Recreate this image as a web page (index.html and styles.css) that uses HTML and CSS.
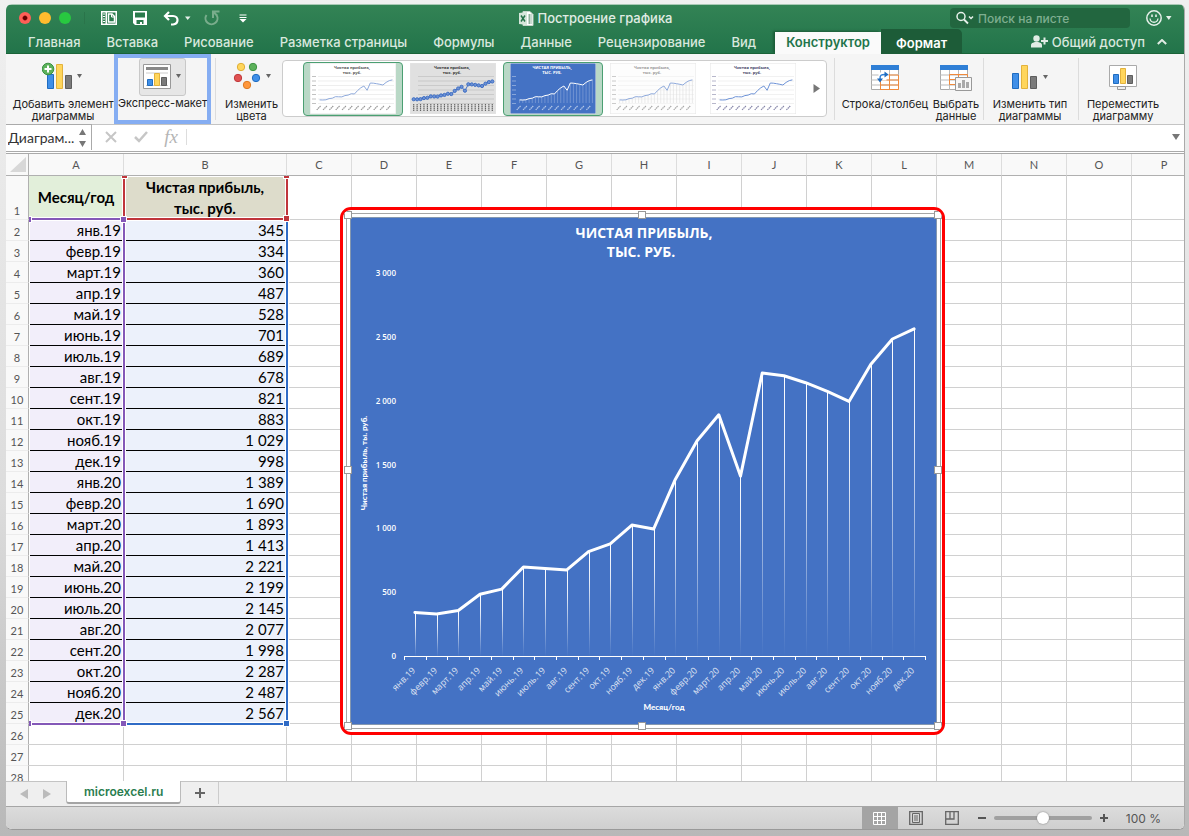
FILE: index.html
```html
<!DOCTYPE html>
<html lang="ru">
<head>
  <meta charset="UTF-8">
  <title>Построение графика</title>
  <link rel="stylesheet" href="styles.css">
</head>
<body>
  <div class="window">
    <header class="header">
      <div class="titlebar">
        <div class="title-left">
          <div class="lights">
            <button class="light light-red" aria-label="Закрыть"></button>
            <button class="light light-yellow" aria-label="Свернуть"></button>
            <button class="light light-green" aria-label="Развернуть"></button>
          </div>
          <button class="quick-button" aria-label="Шаблоны">
            <svg width="16" height="14" viewBox="0 0 16 14"><path d="M0 0h16v14H0z" fill="#fff"/><path d="M1.500 1.500h3v11h-3zM6 1.500h8.500v11H6z" fill="#2a7a4c"/><path d="M2 3h2M2 5.500h2M2 8h2M2 10.500h2" stroke="#fff"/><path d="M7.500 3h3.500l2.500 2.500V11h-6z" fill="#2a7a4c" stroke="#fff" stroke-width="1.500"/><path d="M10.500 3v3h3" fill="none" stroke="#fff"/></svg>
          </button>
          <button class="quick-button" aria-label="Сохранить">
            <svg width="14" height="14" viewBox="0 0 14 14"><path d="M0 0h14v14H2l-2-2z" fill="#fff"/><path d="M2 1.500h10v5H2zM3.500 9h7v4H9v-2H7v2H3.500z" fill="#2a7a4c"/></svg>
          </button>
          <button class="quick-button" aria-label="Отменить">
            <svg width="28" height="15" viewBox="0 0 28 15"><path d="M6 1L2 5l4 4M2 5h8c6 0 6 8 0 8.500H8" fill="none" stroke="#fff" stroke-width="2.200"/><path d="M22 5.500h5.500L24.700 9z" fill="#e6f0ea"/></svg>
          </button>
          <button class="quick-button redo" aria-label="Повторить">
            <svg width="16" height="16" viewBox="0 0 16 16"><path d="M12.500 5A6 6 0 1 1 2.500 5" fill="none" stroke="#79ad8c" stroke-width="2"/><path d="M15.500 1.500H9V8M9 1.500l4 4" fill="none" stroke="#79ad8c" stroke-width="2"/></svg>
          </button>
          <button class="quick-button" aria-label="Настройка панели">
            <svg width="8" height="9" viewBox="0 0 8 9"><path d="M.500 1h7M.500 3.500h7" stroke="#fff"/><path d="M.500 5h7L4 8.500z" fill="#fff"/></svg>
          </button>
        </div>
        <div class="doc-title">
          <svg width="15" height="15" viewBox="0 0 15 15"><path d="M4 .5h7l3 3v11H4z" fill="#fff" stroke="#c5d6cb"/><path d="M9 4h4M9 6h4M9 8h4M9 10h4M9 12h4M10.500 3v10" stroke="#8fb39d"/><path d="M0 2l8-1v13l-8-1z" fill="#d5e6da"/><path d="M2 4.500l4 6M6 4.500l-4 6" stroke="#26734a" stroke-width="1.500"/></svg>
          <span>Построение графика</span>
        </div>
        <div class="title-right">
          <label class="search">
            <svg width="20" height="14" viewBox="0 0 20 14"><circle cx="6" cy="5.500" r="4" fill="none" stroke="#e6f0ea" stroke-width="1.500"/><path d="M9 8.500l4 4" stroke="#e6f0ea" stroke-width="1.800"/><path d="M14 5.500l2 2 2-2" fill="none" stroke="#e6f0ea" stroke-width="1.500"/></svg>
            <input type="search" placeholder="Поиск на листе" aria-label="Поиск на листе">
          </label>
          <button class="quick-button" aria-label="Отзыв">
            <svg width="26" height="16" viewBox="0 0 26 16"><circle cx="8" cy="8" r="7.200" fill="none" stroke="#e6f0ea" stroke-width="1.500"/><path d="M6 4.500v2.500M10 4.500v2.500" stroke="#e6f0ea" stroke-width="1.600"/><path d="M4 8.500c.8 5 7.200 5 8 0" fill="none" stroke="#e6f0ea" stroke-width="1.300"/><path d="M20 6h5.500l-2.700 4z" fill="#e6f0ea"/></svg>
          </button>
        </div>
      </div>
      <nav class="tabs">
        <button class="tab">Главная</button>
        <button class="tab">Вставка</button>
        <button class="tab">Рисование</button>
        <button class="tab">Разметка страницы</button>
        <button class="tab">Формулы</button>
        <button class="tab">Данные</button>
        <button class="tab">Рецензирование</button>
        <button class="tab">Вид</button>
        <button class="tab tab-active">Конструктор</button>
        <button class="tab tab-format">Формат</button>
        <button class="share">
          <svg width="17" height="13" viewBox="0 0 17 13"><circle cx="5.500" cy="3.500" r="3.200" fill="#e0ece4"/><path d="M0 12.500V10c0-2 2-2.500 4-3h3c2 .5 4 1 4 3v2.500z" fill="#e0ece4"/><path d="M13.500 2.500v7M10 6h7" stroke="#e0ece4" stroke-width="2"/></svg>
          Общий доступ
        </button>
        <button class="collapse" aria-label="Свернуть ленту">
          <svg width="10" height="6" viewBox="0 0 10 6"><path d="M.8 5L5 1l4.200 4" fill="none" stroke="#e0ece4" stroke-width="2"/></svg>
        </button>
      </nav>
    </header>

    <div class="ribbon">
      <button class="tool tool-add">
        <span class="tool-icon">
          <svg width="42" height="30" viewBox="0 0 42 30"><path d="M5.500 13.500h6v14h-6z" fill="#3f8fe8" stroke="#1f6cc0"/><path d="M14.500 3.500h6v24h-6z" fill="#ffd65c" stroke="#e3b23c"/><path d="M23.500 14.500h6v13h-6z" fill="#7b7b7b" stroke="#5e5e5e"/><circle cx="6" cy="8" r="5.800" fill="#5cb15a" stroke="#3b9142"/><path d="M6 4.500v7M2.500 8h7" stroke="#fff" stroke-width="2"/><path d="M35 13h5l-2.500 4z" fill="#666"/></svg>
        </span>
        Добавить элемент<br>диаграммы
      </button>
      <button class="tool tool-express">
        <span class="tool-icon tool-pressed">
          <svg width="40" height="26" viewBox="0 0 40 26"><path d="M.5.5h27v24H.500z" fill="#fff" stroke="#999"/><path d="M3 3h22v3H3z" fill="#888"/><path d="M3 9h22M3 21.500h22" stroke="#ccc"/><path d="M4.500 15.500h5v6h-5z" fill="#3f8fe8" stroke="#1f6cc0"/><path d="M11.500 9.500h5v12h-5z" fill="#ffd65c" stroke="#e3b23c"/><path d="M18.500 13.500h5v8h-5z" fill="#7b7b7b" stroke="#5e5e5e"/><path d="M33 10h5l-2.500 4z" fill="#666"/></svg>
        </span>
        Экспресс-макет
      </button>
      <div class="separator"></div>
      <button class="tool tool-colors">
        <span class="tool-icon">
          <svg width="38" height="30" viewBox="0 0 38 30"><circle cx="8" cy="6" r="3.700" fill="#ffd65c" stroke="#dfae38"/><circle cx="20" cy="6" r="3.700" fill="#5cb15a" stroke="#3f9344"/><circle cx="5" cy="17" r="3.700" fill="#e05252" stroke="#c03a3c"/><circle cx="23" cy="17" r="3.700" fill="#3f8fe8" stroke="#1f6cc0"/><circle cx="14" cy="24" r="3.700" fill="#ff973c" stroke="#dc7a24"/><path d="M33 13h5l-2.500 4z" fill="#666"/></svg>
        </span>
        Изменить<br>цвета
      </button>
      <div class="gallery">
        <div class="gallery-items" id="gallery"></div>
        <button class="gallery-next" aria-label="Далее">
          <svg width="7" height="9" viewBox="0 0 7 9"><path d="M.5 0L7 4.500.500 9z" fill="#777"/></svg>
        </button>
      </div>
      <div class="separator"></div>
      <button class="tool tool-switch">
        <span class="tool-icon">
          <svg width="28" height="26" viewBox="0 0 28 26"><path d="M.5.500h27v24H.500z" fill="#fff" stroke="#aaa"/><path d="M0 0h28v5H0z" fill="#2f7fd6"/><path d="M0 10h28M0 15h28M0 20h28M9.500 5v20M18.500 5v20" stroke="#bbb"/><path d="M18 10h9M9 15h18M9 20h18M9.500 15v9M18.500 9v15M9 24.500h18.500V10" stroke="#f08a3c" fill="none"/><path d="M7.500 7.500h8v8h-8z" fill="#fff"/><path d="M9 14c0-4 1-4.500 5-4.500" fill="none" stroke="#2f7fd6" stroke-width="1.500"/><path d="M13.500 6.500l4 3-4 3zM6 13.500h6l-3 4z" fill="#1f6cc0"/></svg>
        </span>
        Строка/столбец
      </button>
      <button class="tool tool-select">
        <span class="tool-icon">
          <svg width="32" height="26" viewBox="0 0 32 26"><path d="M.5.500h27v24H.500z" fill="#fff" stroke="#aaa"/><path d="M0 0h28v5H0z" fill="#2f7fd6"/><path d="M0 10h28M0 15h28M0 20h28M9.500 5v20M18.500 5v20" stroke="#bbb"/><path d="M9.500 9.500h18v10h-18zM9 14.500h18M18.500 9v10" stroke="#f08a3c" fill="none"/><path d="M15.500 12.500h16v13h-16z" fill="#f7f7f7" stroke="#999"/><path d="M18 18h3v5h-3zM22 15h3v8h-3zM26 17h3v6h-3z" fill="#aaa"/></svg>
        </span>
        Выбрать<br>данные
      </button>
      <div class="separator"></div>
      <button class="tool tool-type">
        <span class="tool-icon">
          <svg width="36" height="26" viewBox="0 0 36 26"><path d="M.5 8.500h6v15h-6z" fill="#3f8fe8" stroke="#1f6cc0"/><path d="M9.500.500h6v23h-6z" fill="#ffd65c" stroke="#e3b23c"/><path d="M18.500 11.500h6v12h-6z" fill="#7b7b7b" stroke="#5e5e5e"/><path d="M31 10h5l-2.500 4z" fill="#666"/></svg>
        </span>
        Изменить тип<br>диаграммы
      </button>
      <div class="separator"></div>
      <button class="tool tool-move">
        <span class="tool-icon">
          <svg width="28" height="26" viewBox="0 0 28 26"><path d="M.5.500h27v21H.500z" fill="#fff" stroke="#aaa"/><path d="M8.500 24.500v-3h8v3z" fill="#eee" stroke="#999"/><path d="M4.500 9.500h5v9h-5z" fill="#3f8fe8" stroke="#1f6cc0"/><path d="M11.500 3.500h5v15h-5z" fill="#ffd65c" stroke="#e3b23c"/><path d="M18.500 10.500h5v8h-5z" fill="#7b7b7b" stroke="#5e5e5e"/></svg>
        </span>
        Переместить<br>диаграмму
      </button>
    </div>

    <div class="formula-bar">
      <div class="name-box">
        <input type="text" value="Диаграм..." aria-label="Имя">
        <svg width="7" height="18" viewBox="0 0 7 18"><path d="M0 6h7L3.500 0zM0 12h7l-3.500 6z" fill="#777"/></svg>
      </div>
      <button class="formula-button" aria-label="Отмена">
        <svg width="12" height="12" viewBox="0 0 12 12"><path d="M1 1l10 10M11 1L1 11" stroke="#c6c6c6" stroke-width="2"/></svg>
      </button>
      <button class="formula-button" aria-label="Ввод">
        <svg width="14" height="12" viewBox="0 0 14 12"><path d="M1 6l4 4 8-9" fill="none" stroke="#c6c6c6" stroke-width="2.500"/></svg>
      </button>
      <button class="formula-button fx">fx</button>
      <input class="formula-input" type="text" aria-label="Строка формул">
      <svg width="8" height="6" viewBox="0 0 8 6"><path d="M0 0h8L4 6z" fill="#777"/></svg>
    </div>

    <main class="sheet">
      <table class="grid">
        <thead><tr id="grid-head"></tr></thead>
        <tbody id="grid-body"></tbody>
      </table>
      <div class="ranges">
        <div class="range range-values"><i class="knob knob-se"></i></div>
        <div class="range range-title"><i class="knob knob-nw"></i><i class="knob knob-ne"></i><i class="knob knob-se"></i></div>
        <div class="range range-months"><i class="knob knob-nw"></i><i class="knob knob-ne"></i><i class="knob knob-sw"></i><i class="knob knob-se"></i></div>
      </div>
      <div class="chart">
        <svg id="chart" width="599" height="522" viewBox="-1 0 599 522"></svg>
      </div>
    </main>

    <div class="sheet-tabs">
      <button class="sheet-arrow" aria-label="Предыдущий лист"><svg width="8" height="10" viewBox="0 0 8 10"><path d="M8 0v10L0 5z" fill="#bbb"/></svg></button>
      <button class="sheet-arrow" aria-label="Следующий лист"><svg width="8" height="10" viewBox="0 0 8 10"><path d="M0 0v10l8-5z" fill="#bbb"/></svg></button>
      <button class="sheet-tab">microexcel.ru</button>
      <button class="sheet-add" aria-label="Новый лист"><svg width="10" height="10" viewBox="0 0 10 10"><path d="M5 0v10M0 5h10" stroke="#666" stroke-width="2"/></svg></button>
    </div>

    <footer class="status">
      <button class="view view-active" aria-label="Обычный">
        <svg width="13" height="13" viewBox="0 0 13 13"><path d="M.5.500h12v12H.500zM4.500.500v12M8.500.500v12M.5 4.500h12M.5 8.500h12" fill="none" stroke="#fff"/></svg>
      </button>
      <button class="view" aria-label="Разметка страницы">
        <svg width="14" height="14" viewBox="0 0 14 14"><path d="M.7.700h12.600v12.600H.700z" fill="none" stroke="#666" stroke-width="1.300"/><path d="M3.500 2.500h7v9h-7zM5 5h4M5 7h4M5 9h4" fill="none" stroke="#666"/></svg>
      </button>
      <button class="view" aria-label="Страничный">
        <svg width="14" height="14" viewBox="0 0 14 14"><path d="M.7.700h12.600v12.600H.700zM.7 8H9V.7M5 .7V8" fill="none" stroke="#666" stroke-width="1.300"/></svg>
      </button>
      <button class="zoom-button" aria-label="Уменьшить"><svg width="8" height="8" viewBox="0 0 8 8"><path d="M0 4h8" stroke="#555" stroke-width="2"/></svg></button>
      <input class="zoom-slider" type="range" min="0" max="200" value="100" aria-label="Масштаб">
      <button class="zoom-button" aria-label="Увеличить"><svg width="8" height="8" viewBox="0 0 8 8"><path d="M4 0v8M0 4h8" stroke="#555" stroke-width="2"/></svg></button>
      <span class="zoom-value">100 %</span>
    </footer>
  </div>

  <script src="script.js"></script>
</body>
</html>
```

FILE: styles.css
```css
* {
  box-sizing: border-box;
}

body {
  margin: 0;
  height: 100vh;
  padding: 4px 4px 6px 6px;
  font-family: Inter, "Liberation Sans", sans-serif;
  background: linear-gradient(#f0f0f0, #dcdcdc 60%, #b8b8b8);
  overflow: hidden;
}

button,
input {
  font-family: inherit;
  border: none;
  background: none;
  padding: 0;
  margin: 0;
  outline: none;
}

svg {
  display: block;
  flex: none;
}

.window {
  display: flex;
  flex-direction: column;
  height: 100%;
  border-radius: 6px;
  border-right: 1px solid #aaa;
  border-bottom: 1px solid #999;
  background: #fff;
  overflow: hidden;
}

/* title bar and tabs */
.header {
  flex: none;
  height: 50px;
  border-top: 1px solid #a9c9b5;
  border-bottom: 1px solid #1a6338;
  background: linear-gradient(#338355, #22744a);
}

.titlebar {
  display: flex;
  align-items: center;
  height: 26px;
}

.title-left,
.title-right {
  flex: 1;
  display: flex;
  align-items: center;
}

.title-left {
  gap: 16px;
  padding-left: 13px;
}

.title-right {
  justify-content: flex-end;
  gap: 16px;
  padding-right: 12px;
}

.lights {
  display: flex;
  gap: 8px;
  width: 66px;
  border-right: 1px solid #2a744a;
}

.light {
  width: 12px;
  height: 12px;
  border-radius: 50%;
}

.light-red {
  background: radial-gradient(#600 20%, #ff5f57 35%);
}

.light-yellow {
  background: #febc2e;
}

.light-green {
  background: #28c840;
}

.redo {
  margin-left: -3px;
  margin-right: 3px;
}

.doc-title {
  display: flex;
  align-items: center;
  gap: 4px;
  color: #e0ece4;
  font-size: 13px;
  font-weight: 500;
}

.search {
  display: flex;
  align-items: center;
  gap: 3px;
  width: 180px;
  height: 20px;
  padding-left: 5px;
  border-radius: 4px;
  background: #22663f;
}

.search input {
  width: 140px;
  color: #fff;
  font-size: 12px;
  font-weight: 500;
}

.search input::placeholder {
  color: #7fae90;
  opacity: 1;
}

.tabs {
  display: flex;
  align-items: flex-end;
  height: 23px;
  padding-left: 9px;
}

.tab {
  height: 22px;
  padding: 0 13px 2px;
  color: #d9e8de;
  font-size: 13px;
  font-weight: 500;
  white-space: nowrap;
}

.tab-active {
  padding: 0 11px 2px;
  margin-left: 6px;
  background: #fafafa;
  color: #22744a;
  font-weight: 600;
  box-shadow: -2px -1px 2px #1c5c38;
}

.tab-format {
  height: 25px;
  padding: 2px 15px 0;
  border-radius: 0 5px 0 0;
  background: #1d5c38;
  color: #fff;
  font-weight: 600;
}

.share {
  display: flex;
  align-items: center;
  gap: 4px;
  height: 25px;
  margin-left: auto;
  color: #d9e8de;
  font-size: 13px;
  font-weight: 500;
  white-space: nowrap;
}

.collapse {
  height: 25px;
  padding: 0 17px 0 12px;
}

/* ribbon */
.ribbon {
  flex: none;
  display: flex;
  height: 71px;
  padding-left: 6px;
  padding-right: 19px;
  border-bottom: 1px solid #c4c4c4;
  background: #f5f5f5;
}

.tool {
  display: flex;
  flex-direction: column;
  align-items: center;
  flex: none;
  padding-top: 7px;
  color: #222;
  font-size: 11px;
  line-height: 12px;
  white-space: nowrap;
}

.tool-icon {
  display: flex;
  justify-content: center;
  height: 36px;
  margin-bottom: 1px;
}

.tool-add {
  width: 102px;
}

.tool-express {
  width: 97px;
  padding-top: 0;
  border: 4px solid #85adf2;
}

.tool-pressed {
  align-items: center;
  width: 47px;
  height: 38px;
  border: 1px solid #c8c8c8;
  border-radius: 3px;
  background: #e6e6e6;
}

.tool-colors {
  width: 64px;
  padding-left: 3px;
}

.tool-switch,
.tool-select,
.tool-type,
.tool-move {
  padding-top: 11px;
}

.tool-switch .tool-icon,
.tool-select .tool-icon,
.tool-type .tool-icon,
.tool-move .tool-icon {
  height: 32px;
}

.tool-switch {
  width: 96px;
}

.tool-select {
  width: 46px;
}

.tool-type {
  width: 88px;
}

.tool-move {
  width: 84px;
}

.separator {
  flex: none;
  width: 1px;
  height: 62px;
  margin: 4px 2px 0 4px;
  background: #dcdcdc;
}

.gallery {
  flex: 1;
  display: flex;
  align-items: center;
  height: 57px;
  margin: 6px 3px 0 0;
  padding-left: 20px;
  border: 1px solid #ccc;
  border-radius: 4px;
  background: #fff;
  overflow: hidden;
}

.gallery-items {
  flex: 1;
  display: flex;
  overflow: hidden;
}

.gallery-item {
  display: flex;
  justify-content: center;
  align-items: center;
  flex: none;
  width: 100px;
  height: 54px;
  border: 1px solid transparent;
  border-radius: 4px;
}

.gallery-selected {
  border-color: #4b9f72;
  background: #b9d8c6;
}

.gallery-next {
  padding: 0 6px;
}

/* formula bar */
.formula-bar {
  flex: none;
  display: flex;
  align-items: center;
  height: 29px;
  padding-right: 4px;
  padding-bottom: 2px;
  border-bottom: 3px double #aaa;
  background: #fff;
}

.name-box {
  display: flex;
  align-items: center;
  width: 86px;
  height: 26px;
  padding: 0 5px 0 2px;
  margin-right: 4px;
  border: solid #aaa;
  border-width: 1px 1px 0 0;
}

.name-box input {
  flex: 1;
  min-width: 0;
  color: #333;
  font-family: Lato, sans-serif;
  font-size: 14px;
}

.formula-button {
  display: flex;
  justify-content: center;
  width: 30px;
  color: #b5b5b5;
}

.fx {
  font: italic 19px "Liberation Serif", serif;
  line-height: 20px;
}

.formula-input {
  flex: 1;
  height: 16px;
  border-left: 1px solid #ddd;
}

/* sheet */
.sheet {
  position: relative;
  flex: 1;
  min-height: 0;
  background: #fff;
  overflow: hidden;
}

.grid {
  width: max-content;
  table-layout: fixed;
  border-collapse: separate;
  border-spacing: 0;
  font-family: Lato, "Open Sans", sans-serif;
}

.grid th,
.grid td {
  height: 21px;
  padding: 0 2px;
  border-right: 1px solid #d0d0d0;
  border-bottom: 1px solid #d0d0d0;
  font-size: 15px;
  line-height: 18px;
  white-space: nowrap;
}

.grid thead th {
  width: 65px;
  min-width: 65px;
  height: 22px;
  border-color: #ddd;
  border-bottom-color: #b0b0b0;
  background: #f9f9f9;
  color: #555;
  font-size: 11px;
  font-weight: 400;
}

.grid thead .corner {
  width: 23px;
  min-width: 23px;
  padding: 0 2px;
  border-right-color: #b0b0b0;
}

.corner svg {
  margin-left: auto;
}

.grid thead .col-a {
  width: 95px;
  min-width: 95px;
}

.grid thead .col-b {
  width: 163px;
  min-width: 163px;
}

.grid .row-number {
  padding: 4px 0 0;
  border-right-color: #b0b0b0;
  border-bottom-color: #ececec;
  background: #f9f9f9;
  color: #555;
  font-size: 11px;
  font-weight: 400;
  line-height: 16px;
  text-align: center;
  vertical-align: bottom;
}

.grid .first-row th,
.grid .first-row td {
  height: 44px;
}

.grid .title-cell {
  font-weight: 700;
  line-height: 21px;
  text-align: center;
}

.title-month {
  background: #e2efda;
}

.title-profit {
  background: #dddccb;
}

.grid .month,
.grid .profit {
  border-bottom-color: #000;
  text-align: right;
}

.grid .month {
  background: #f2eefa;
}

.grid .profit {
  background: #ecf1fb;
}

/* coloured frames over the ranges of the chart, clipped by the headings */
.ranges {
  position: absolute;
  inset: 22px 0 0 23px;
  overflow: hidden;
  pointer-events: none;
}

.range {
  position: absolute;
  border: 0 solid;
  box-shadow: 0 0 0 1px #fff, inset 0 0 0 1px #fff;
}

.range-values {
  left: 95px;
  top: 43px;
  width: 164px;
  height: 506px;
  border-width: 0 2px 2px 0;
  border-color: #2f6bc6;
  color: #2f6bc6;
}

.range-months {
  left: 0;
  top: 42px;
  width: 96px;
  height: 507px;
  border-width: 2px 2px 2px 0;
  border-color: #8458b8;
  color: #8458b8;
}

.range-title {
  left: 94px;
  top: 0;
  width: 165px;
  height: 44px;
  border-width: 0 2px 2px;
  border-color: #c0353b;
  color: #c0353b;
}

.knob {
  position: absolute;
  width: 5px;
  height: 5px;
  border: 1px solid #fff;
  box-sizing: content-box;
  background: currentColor;
}

.knob-nw {
  left: -4px;
  top: -4px;
}

.knob-ne {
  right: -4px;
  top: -4px;
}

.knob-sw {
  left: -4px;
  bottom: -4px;
}

.knob-se {
  right: -4px;
  bottom: -4px;
}

.chart {
  position: absolute;
  left: 334px;
  top: 53px;
  border: 3px solid #f00;
  border-radius: 11px;
  background: #fff;
  overflow: hidden;
}

.chart text {
  font-family: "Open Sans", sans-serif;
  fill: #fff;
}

.chart-title {
  font-size: 14px;
  font-weight: 700;
  text-anchor: middle;
}

.axis-value {
  font-size: 8px;
  font-weight: 600;
  text-anchor: end;
}

.axis-month {
  font-size: 9px;
  text-anchor: end;
  opacity: 0.8;
}

.chart .axis-title {
  font-family: Lato, sans-serif;
  font-size: 8px;
  font-weight: 900;
  text-anchor: middle;
}

.thumb-title {
  font: 700 4px "Open Sans", sans-serif;
  text-anchor: middle;
}

/* sheet tabs */
.sheet-tabs {
  flex: none;
  display: flex;
  height: 26px;
  padding-left: 14px;
  border-top: 1px solid #c4c4c4;
  border-bottom: 1px solid #a6a6a6;
  background: #efefef;
}

.sheet-arrow {
  width: 8px;
  margin-right: 15px;
}

.sheet-tab {
  height: 23px;
  margin-top: -1px;
  padding: 0 17px;
  border: 1px solid #bbb;
  border-top: none;
  border-bottom: 2px solid #a5a5a5;
  border-radius: 0 0 3px 3px;
  background: #fff;
  color: #2a7d4f;
  font-size: 12px;
  font-weight: 600;
}

.sheet-add {
  display: flex;
  align-items: center;
  justify-content: center;
  width: 38px;
  height: 22px;
  border-right: 1px solid #ccc;
}

/* status bar */
.status {
  flex: none;
  display: flex;
  align-items: center;
  justify-content: flex-end;
  height: 22px;
  padding-right: 23px;
  background: linear-gradient(#dcdcdc, #cfcfcf);
}

.view {
  display: flex;
  align-items: center;
  justify-content: center;
  width: 36px;
  height: 22px;
}

.view-active {
  background: #a4a4a4;
}

.zoom-button {
  padding: 0 8px;
}

.zoom-slider {
  appearance: none;
  width: 98px;
  height: 12px;
}

.zoom-slider::-webkit-slider-runnable-track {
  height: 4px;
  border-radius: 2px;
  background: #a0a0a0;
}

.zoom-slider::-webkit-slider-thumb {
  appearance: none;
  width: 12px;
  height: 12px;
  margin-top: -4px;
  border-radius: 50%;
  background: #fff;
  box-shadow: 0 0 2px #777;
}

.zoom-value {
  margin-left: 10px;
  color: #555;
  font-size: 12px;
}
```

FILE: script.js
```js
var data = [
  ['янв.19', 345], ['февр.19', 334], ['март.19', 360], ['апр.19', 487],
  ['май.19', 528], ['июнь.19', 701], ['июль.19', 689], ['авг.19', 678],
  ['сент.19', 821], ['окт.19', 883], ['нояб.19', 1029], ['дек.19', 998],
  ['янв.20', 1389], ['февр.20', 1690], ['март.20', 1893], ['апр.20', 1413],
  ['май.20', 2221], ['июнь.20', 2199], ['июль.20', 2145], ['авг.20', 2077],
  ['сент.20', 1998], ['окт.20', 2287], ['нояб.20', 2487], ['дек.20', 2567]
];
var columns = 'ABCDEFGHIJKLMNOP'.split('');

function format(n) {
  return String(n).replace(/(\d)(\d{3})$/, '$1 $2');
}

function drawGrid() {
  var head = '<th class="corner"><svg width="16" height="15" viewBox="0 0 16 15"><path d="M16 0v15H0z" fill="#d8d8d8"/></svg></th>';
  columns.forEach(function (name) {
    head += '<th class="col-' + name.toLowerCase() + '">' + name + '</th>';
  });
  document.getElementById('grid-head').innerHTML = head;

  var empty = '<td></td>'.repeat(columns.length - 2);
  var body = '';
  for (var row = 1; row <= 28; row++) {
    var item = data[row - 2];
    body += '<tr' + (row === 1 ? ' class="first-row"' : '') + '><th class="row-number">' + row + '</th>';
    if (row === 1) {
      body += '<td class="title-cell title-month">Месяц/год</td><td class="title-cell title-profit">Чистая прибыль,<br>тыс. руб.</td>';
    } else if (item) {
      body += '<td class="month">' + item[0] + '</td><td class="profit">' + format(item[1]) + '</td>';
    } else {
      body += '<td></td><td></td>';
    }
    body += empty + '</tr>';
  }
  document.getElementById('grid-body').innerHTML = body;
}

// points of the line inside a plot area
function plot(left, bottom, width, height) {
  return data.map(function (item, i) {
    return [left + width * (i + 0.5) / data.length, bottom - height * item[1] / 3000];
  });
}

function path(points) {
  return 'M' + points.map(function (p) { return p[0].toFixed(1) + ' ' + p[1].toFixed(1); }).join('L');
}

function drawChart() {
  var left = 60, bottom = 446.5, width = 521, height = 383;
  var points = plot(left, bottom, width, height);
  var svg = '<rect x="2.5" y="3.5" width="594" height="515" fill="none" stroke="#a6a6a6"/>';
  svg += '<rect x="6.5" y="7.5" width="586" height="507" fill="#4472c4" stroke="#8497b0"/>';
  svg += '<text class="chart-title" x="300" y="28">ЧИСТАЯ ПРИБЫЛЬ,</text><text class="chart-title" x="297" y="47">ТЫС. РУБ.</text>';

  for (var v = 0; v <= 3000; v += 500) {
    svg += '<text class="axis-value" x="52" y="' + (bottom + 2.5 - v * height / 3000) + '">' + format(v) + '</text>';
  }
  points.forEach(function (p, i) {
    var x = Math.round(p[0]);
    svg += '<defs><linearGradient id="drop' + i + '" gradientUnits="userSpaceOnUse" x1="0" y1="' + p[1] + '" x2="0" y2="' + bottom + '">' +
      '<stop offset="0" stop-color="#fff"/><stop offset="0.3" stop-color="#fff" stop-opacity="0.85"/><stop offset="1" stop-color="#fff" stop-opacity="0"/></linearGradient></defs>';
    svg += '<rect x="' + x + '" y="' + p[1] + '" width="1" height="' + (bottom - p[1]) + '" fill="url(#drop' + i + ')"/>';
    svg += '<text class="axis-month" transform="translate(' + (x + 1) + ' 461) rotate(-45)">' + data[i][0] + '</text>';
  });
  var ticks = 'M60 446.5H582';
  for (var t = 0; t <= data.length; t++) {
    ticks += 'M' + (Math.round(left + width * t / data.length) + 0.5) + ' 446v4';
  }
  svg += '<path d="' + ticks + '" stroke="#fff" fill="none"/>';
  svg += '<path d="' + path(points) + '" stroke="#fff" stroke-width="3" stroke-linejoin="round" stroke-linecap="round" fill="none"/>';
  svg += '<text class="axis-title" x="320" y="500">Месяц/год</text>';
  svg += '<text class="axis-title" transform="translate(23 253) rotate(-90)">Чистая прибыль, ты. руб.</text>';
  [[4, 5], [298, 5], [594, 5], [4, 260], [594, 260], [4, 516], [298, 516], [594, 516]].forEach(function (h) {
    svg += '<rect x="' + (h[0] - 3.5) + '" y="' + (h[1] - 3.5) + '" width="7" height="7" fill="#fff" stroke="#999"/>';
  });
  document.getElementById('chart').innerHTML = svg;
}

function drawThumb(style) {
  var points = plot(8, 40, 76, 27);
  var svg = '<svg width="86" height="51" viewBox="0 0 86 51"><rect width="86" height="51" fill="' + style.back + '" stroke="#e4e4e4"/>';
  svg += '<text class="thumb-title" fill="' + style.title + '" x="42" y="6">' + (style.caps ? 'ЧИСТАЯ ПРИБЫЛЬ,' : 'Чистая прибыль,') + '</text>';
  svg += '<text class="thumb-title" fill="' + style.title + '" x="42" y="11">' + (style.caps ? 'ТЫС. РУБ.' : 'тыс. руб.') + '</text>';
  for (var g = 0; g <= 6; g++) {
    var y = 40.5 - g * 4.5;
    svg += '<path d="M8 ' + y + 'h76" stroke="' + style.lines + '" stroke-width="0.6"/>';
    if (!style.dots) {
      svg += '<path d="M2 ' + y + 'h4" stroke="' + style.labels + '" stroke-width="1" opacity="0.6"/>';
    }
  }
  if (style.drops) {
    points.forEach(function (p) {
      svg += '<path d="M' + p[0] + ' ' + p[1] + 'V40" stroke="' + style.drops + '" stroke-width="0.6"/>';
    });
  }
  if (style.dots) {
    points = plot(2, 39, 82, 24);
  }
  for (var m = 0; m < 24; m += style.dots ? 1 : 2) {
    svg += '<path d="' + (style.dots ? 'M' + points[m][0] + ' 41v7' : 'M' + (points[m][0] + 1) + ' 43l-4 4') + '" stroke="' + style.labels + '" stroke-width="1.2" stroke-dasharray="1.5 0.5"/>';
  }
  svg += '<path d="' + path(points) + '" fill="none" stroke="' + style.line + '" stroke-width="1"/>';
  if (style.dots) {
    points.forEach(function (p) {
      svg += '<circle cx="' + p[0] + '" cy="' + p[1] + '" r="1.6" fill="#6d92d6" stroke="#3f6fc4"/>';
    });
  }
  return svg + '</svg>';
}

function drawGallery() {
  var styles = [
    { back: '#fff', title: '#555', lines: '#e2e2e2', labels: '#999', line: '#8faadc', selected: true },
    { back: '#e0e0e0', title: '#333', lines: '#bbb', labels: '#666', line: '#4472c4', dots: true },
    { back: '#4472c4', title: '#fff', lines: 'none', labels: '#b4c7e7', line: '#fff', drops: '#8faadc', caps: true, selected: true },
    { back: '#fdfdfd', title: '#999', lines: '#eee', labels: '#aaa', line: '#8faadc', drops: '#ddd' },
    { back: '#fff', title: '#446', lines: '#e8e8e8', labels: '#88a', line: '#6d92d6' }
  ];
  document.getElementById('gallery').innerHTML = styles.map(function (style, i) {
    return '<button class="gallery-item' + (style.selected ? ' gallery-selected' : '') + '" aria-label="Стиль ' + (i + 1) + '">' + drawThumb(style) + '</button>';
  }).join('');
}

drawGrid();
drawChart();
drawGallery();
```
